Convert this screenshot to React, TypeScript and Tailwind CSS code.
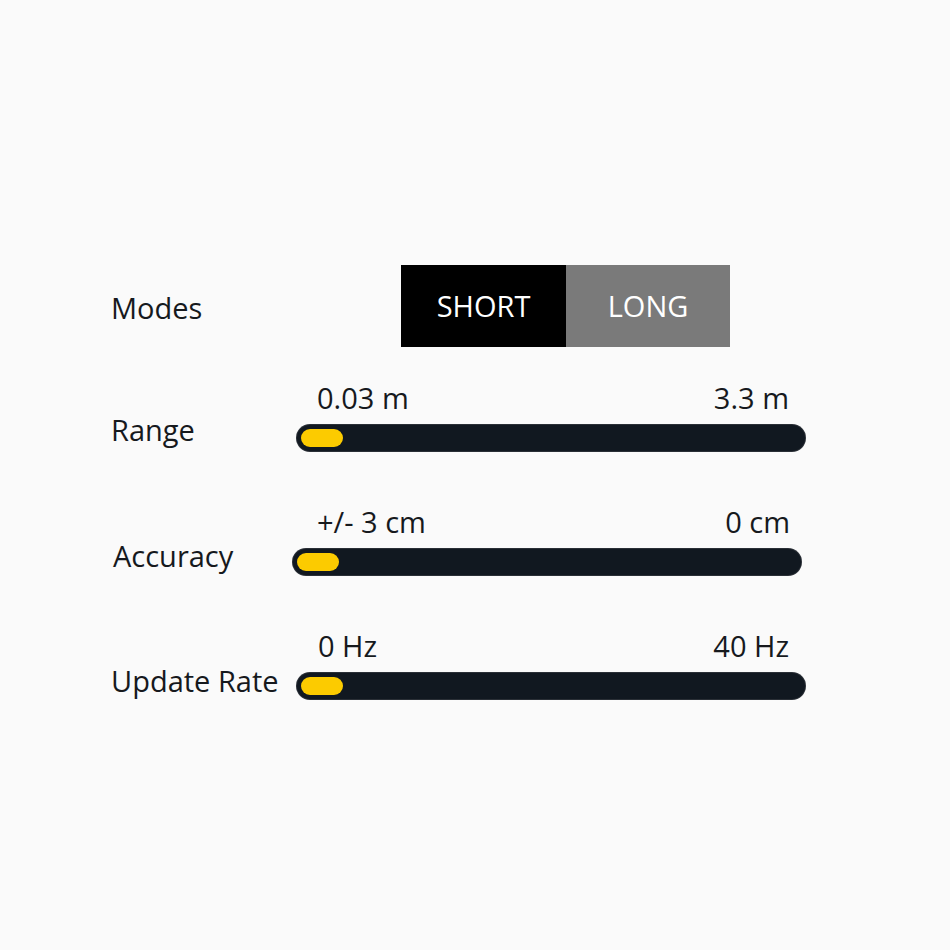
import React from "react";

const font = { fontFamily: '"Open Sans", "Noto Sans", sans-serif' };

function Bar() {
  return (
    <div className="h-[26px] w-[508px] rounded-full bg-[#111820] p-[4px] shadow-[0_0_0_1px_#2a2f36]">
      <div className="h-[18px] w-[42px] rounded-full bg-[#fccb00]" />
    </div>
  );
}

export default function App() {
  return (
    <div
      className="min-h-[950px] w-[950px] bg-[#fafafa] pl-[111px] pt-[265px] text-[29px] leading-[35px] text-[#16191d]"
      style={font}
    >
      <div className="flex h-[82px] items-center">
        <div className="w-[290px] pt-[2px]">Modes</div>
        <div className="flex h-[82px]">
          <div className="flex w-[165px] items-center justify-center bg-black pb-[2px] text-white">
            SHORT
          </div>
          <div className="flex w-[164px] items-center justify-center bg-[#7a7a7a] pb-[2px] text-white">
            LONG
          </div>
        </div>
      </div>

      <div className="mt-[33px] flex">
        <div className="w-[186px] self-end mb-[4px]">Range</div>
        <div className="flex w-[508px] flex-col">
          <div className="flex justify-between pl-[20px] pr-[16px]">
            <span>0.03 m</span>
            <span>3.3 m</span>
          </div>
          <div className="mt-[10px]">
            <Bar />
          </div>
        </div>
      </div>

      <div className="mt-[53px] flex">
        <div className="w-[182px] self-end mb-[2px] pl-[2px]">Accuracy</div>
        <div className="flex w-[508px] flex-col">
          <div className="flex justify-between pl-[24px] pr-[11px]">
            <span>+/- 3 cm</span>
            <span>0 cm</span>
          </div>
          <div className="mt-[10px]">
            <Bar />
          </div>
        </div>
      </div>

      <div className="mt-[53px] flex">
        <div className="w-[186px] self-end mb-[1px]">Update Rate</div>
        <div className="flex w-[508px] flex-col">
          <div className="flex justify-between pl-[21px] pr-[16px]">
            <span>0 Hz</span>
            <span>40 Hz</span>
          </div>
          <div className="mt-[10px]">
            <Bar />
          </div>
        </div>
      </div>
    </div>
  );
}
